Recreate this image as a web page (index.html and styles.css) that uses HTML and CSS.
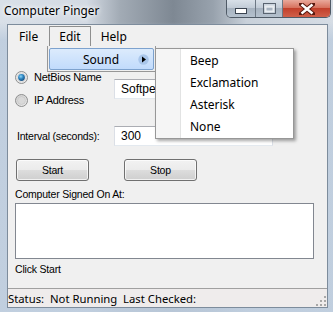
FILE: index.html
```html
<!DOCTYPE html>
<html lang="en">
<head>
  <meta charset="UTF-8" />
  <title>Computer Pinger</title>
  <link rel="stylesheet" href="styles.css">
</head>
<body>

  <div class="window">
    <div class="titlebar">
      <span class="title">Computer Pinger</span>
      <div class="caption">
        <span class="cap cap-min">
          <svg width="12" height="6" viewBox="0 0 12 6"><rect x="0.5" y="0.5" width="11" height="5" fill="#fff" stroke="#3a4450"/></svg>
        </span>
        <span class="cap cap-max">
          <svg width="13" height="11" viewBox="0 0 13 11"><rect x="0.5" y="0.5" width="12" height="10" fill="none" stroke="#5a6470"/><rect x="2.5" y="3.5" width="8" height="5" fill="none" stroke="#e8ecf0" stroke-width="2"/></svg>
        </span>
        <span class="cap cap-close">
          <svg width="16" height="12" viewBox="0 0 16 12"><path d="M2 1 L14 11 M14 1 L2 11" stroke="#5a1a10" stroke-width="4.5" stroke-linecap="round"/><path d="M2.5 1.5 L13.5 10.5 M13.5 1.5 L2.5 10.5" stroke="#fff" stroke-width="2.4"/></svg>
        </span>
      </div>
    </div>

    <div class="client">
      <div class="menubar">
        <span class="menu-item">File</span>
        <span class="menu-item open">Edit</span>
        <span class="menu-item">Help</span>
      </div>

      <div class="form">
        <div class="top-row">
          <div class="choices">
            <div class="radio">
              <svg width="13" height="13" viewBox="0 0 13 13">
                <defs>
                  <radialGradient id="dot" cx="0.4" cy="0.35" r="0.7">
                    <stop offset="0" stop-color="#8fd6f7"/>
                    <stop offset="0.5" stop-color="#2c84c0"/>
                    <stop offset="1" stop-color="#1a4c7a"/>
                  </radialGradient>
                </defs>
                <circle cx="6.5" cy="6.5" r="6" fill="#eaeaea" stroke="#8e8f8f"/>
                <circle cx="6.5" cy="6.5" r="4.3" fill="#f8f8f8" stroke="#c8c8c8" stroke-width="0.6"/>
                <circle cx="6.5" cy="6.5" r="3.4" fill="url(#dot)"/>
              </svg>
              <span>NetBios Name</span>
            </div>
            <div class="radio">
              <svg width="13" height="13" viewBox="0 0 13 13">
                <defs>
                  <radialGradient id="off" cx="0.6" cy="0.65" r="0.7">
                    <stop offset="0" stop-color="#f4f4f4"/>
                    <stop offset="1" stop-color="#cfcfcf"/>
                  </radialGradient>
                </defs>
                <circle cx="6.5" cy="6.5" r="6" fill="url(#off)" stroke="#8e8f8f"/>
                <circle cx="6.5" cy="6.5" r="4" fill="#d9d9d9" stroke="#c0c0c0" stroke-width="0.6"/>
              </svg>
              <span>IP Address</span>
            </div>
          </div>
          <div class="textbox name-box">Softpedia</div>
        </div>

        <div class="interval-row">
          <span class="interval-label">Interval (seconds):</span>
          <div class="textbox">300</div>
        </div>

        <div class="buttons">
          <span class="button">Start</span>
          <span class="button">Stop</span>
        </div>

        <div class="label">Computer Signed On At:</div>
        <div class="listbox"></div>
        <div class="label">Click Start</div>
      </div>

      <div class="statusbar">
        <span>Status:&nbsp; Not Running&nbsp; Last Checked:</span>
        <svg class="grip" width="10" height="10" viewBox="0 0 10 10" fill="#a8a8a8">
          <rect x="8" y="0" width="2" height="2"/>
          <rect x="4" y="4" width="2" height="2"/><rect x="8" y="4" width="2" height="2"/>
          <rect x="0" y="8" width="2" height="2"/><rect x="4" y="8" width="2" height="2"/><rect x="8" y="8" width="2" height="2"/>
        </svg>
      </div>
    </div>

    <div class="dropdown">
      <div class="drop-item">
        <span>Sound</span>
        <svg class="arrow" width="11" height="11" viewBox="0 0 11 11"><circle cx="5.5" cy="5.5" r="5.2" fill="#a9c6ea"/><path d="M4 2.5 L8 5.5 L4 8.5 Z" fill="#000"/></svg>
      </div>
    </div>

    <div class="submenu">
      <div class="sub-item">Beep</div>
      <div class="sub-item">Exclamation</div>
      <div class="sub-item">Asterisk</div>
      <div class="sub-item">None</div>
    </div>
  </div>

</body>
</html>
```

FILE: styles.css
```css
body {
  margin: 0;
  font-family: "Liberation Sans", Arial, sans-serif;
  font-size: 10.5px;
  letter-spacing: -0.2px;
  color: #000;
}

.window {
  position: relative;
  width: 333px;
  height: 312px;
  overflow: hidden;
  background:
    linear-gradient(to bottom, rgba(255,255,255,0) 0, rgba(255,255,255,0) 22px, rgba(190,205,222,0.9) 40px),
    linear-gradient(to right, #d9e0e8 0, #d3dae3 26%, #a2abb5 36%, #7e8893 52%, #98a2ad 64%, #c9d1da 74%, #d6dde5 100%);
  display: flex;
  flex-direction: column;
}

/* title bar */
.titlebar {
  height: 24px;
  display: flex;
  align-items: flex-start;
}

.title {
  font-family: "Noto Sans", sans-serif;
  font-size: 11.8px;
  letter-spacing: 0;
  line-height: 20px;
  padding-left: 4px;
  color: #000;
  text-shadow: 0 0 6px #fff, 0 0 4px #fff;
}

.caption {
  margin-left: auto;
  margin-right: 2px;
  display: flex;
  height: 17px;
  border: 1px solid #4f5a66;
  border-top: none;
  border-radius: 0 0 5px 5px;
  overflow: hidden;
}

.cap {
  display: flex;
  align-items: center;
  justify-content: center;
  height: 17px;
}

.cap-min, .cap-max {
  background: linear-gradient(to bottom, #d8e0e8 0, #c2ccd7 45%, #a7b3c0 50%, #b5c1cd 100%);
  border-right: 1px solid #6d7884;
}

.cap-min {
  width: 28px;
}

.cap-min svg {
  margin-top: 5px;
}

.cap-max {
  width: 26px;
}

.cap-close {
  width: 47px;
  background: linear-gradient(to bottom, #e9a99b 0, #d7725e 45%, #c2402b 50%, #d0604a 100%);
}

/* client area */
.client {
  margin-left: 7px;
  width: 319px;
  height: 282px;
  background-color: #f0f0f0;
  border: 1px solid #7d8c9c;
  display: flex;
  flex-direction: column;
}

.menubar {
  height: 22px;
  display: flex;
  align-items: flex-end;
  padding-left: 1px;
  font-family: "Noto Sans", sans-serif;
  font-size: 12px;
  letter-spacing: 0;
}

.menu-item {
  height: 20px;
  line-height: 19px;
  padding: 0 9px;
  border: 1px solid transparent;
  border-bottom: none;
}

.menu-item.open {
  border-color: #8e8f8f;
  margin-left: 1px;
}

.form {
  padding-left: 7px;
  display: flex;
  flex-direction: column;
  align-items: flex-start;
}

.top-row {
  display: flex;
}

.choices {
  width: 99px;
  margin-top: 22px;
  display: flex;
  flex-direction: column;
  gap: 7px;
}

.radio {
  height: 16px;
  display: flex;
  align-items: center;
  gap: 6px;
  font-size: 11px;
  letter-spacing: -0.3px;
}

.textbox {
  width: 151px;
  height: 18px;
  line-height: 18px;
  padding-left: 6px;
  background: white;
  border: 1px solid #dbdfe6;
  border-top-color: #abadb3;
  border-bottom-color: #e3e9ef;
  font-size: 12px;
  letter-spacing: 0;
}

.name-box {
  margin-top: 32px;
}

.interval-row {
  margin-top: 18px;
  display: flex;
  align-items: center;
}

.interval-label {
  width: 97px;
  padding-left: 2px;
}

.buttons {
  margin-top: 13px;
  padding-left: 1px;
  display: flex;
  gap: 35px;
}

.button {
  width: 71px;
  height: 20px;
  line-height: 20px;
  text-align: center;
  border: 1px solid #707070;
  border-radius: 3px;
  background: linear-gradient(to bottom, #f2f2f2 0, #ebebeb 50%, #dddddd 50%, #cfcfcf 100%);
  box-shadow: inset 0 0 0 1px rgba(255,255,255,0.7);
}

.label {
  line-height: 14px;
  margin-top: 6px;
}

.listbox {
  width: 297px;
  height: 54px;
  margin-top: 2px;
  background: white;
  border: 1px solid #828790;
}

.listbox + .label {
  margin-top: 3px;
}

.statusbar {
  margin-top: auto;
  height: 18px;
  border-top: 1px solid #a0a0a0;
  background-color: #efecec;
  display: flex;
  align-items: center;
  font-family: "Noto Sans", sans-serif;
  font-size: 11.3px;
  letter-spacing: 0;
}

.grip {
  margin-left: auto;
  margin-right: 1px;
  align-self: flex-end;
  margin-bottom: 1px;
}

/* open menus */
.dropdown {
  position: absolute;
  left: 47px;
  top: 46px;
  width: 105px;
  height: 24px;
  padding: 1px 1px 0;
  background-color: #f0f0f0;
  border: 1px solid #979797;
  border-top: none;
  font-family: "Noto Sans", sans-serif;
  font-size: 12px;
  letter-spacing: 0;
}

.drop-item {
  height: 20px;
  margin-top: 1px;
  display: flex;
  align-items: center;
  padding-left: 33px;
  border: 1px solid #7da2ce;
  border-radius: 2px;
  background: linear-gradient(to bottom, #dcebfc 0, #c1dbfc 100%);
}

.arrow {
  margin-left: auto;
  margin-right: 4px;
}

.submenu {
  position: absolute;
  left: 155px;
  top: 48px;
  width: 137px;
  padding-top: 1px;
  background: linear-gradient(to right, #f5f5f5 0, #f5f5f5 24px, #e2e3e3 24px, #e2e3e3 25px, #ffffff 25px);
  border: 1px solid #979797;
  box-shadow: 2px 2px 3px rgba(0,0,0,0.35);
  font-family: "Noto Sans", sans-serif;
  font-size: 12px;
  letter-spacing: 0;
}

.sub-item {
  height: 22px;
  line-height: 22px;
  padding-left: 34px;
}
```
